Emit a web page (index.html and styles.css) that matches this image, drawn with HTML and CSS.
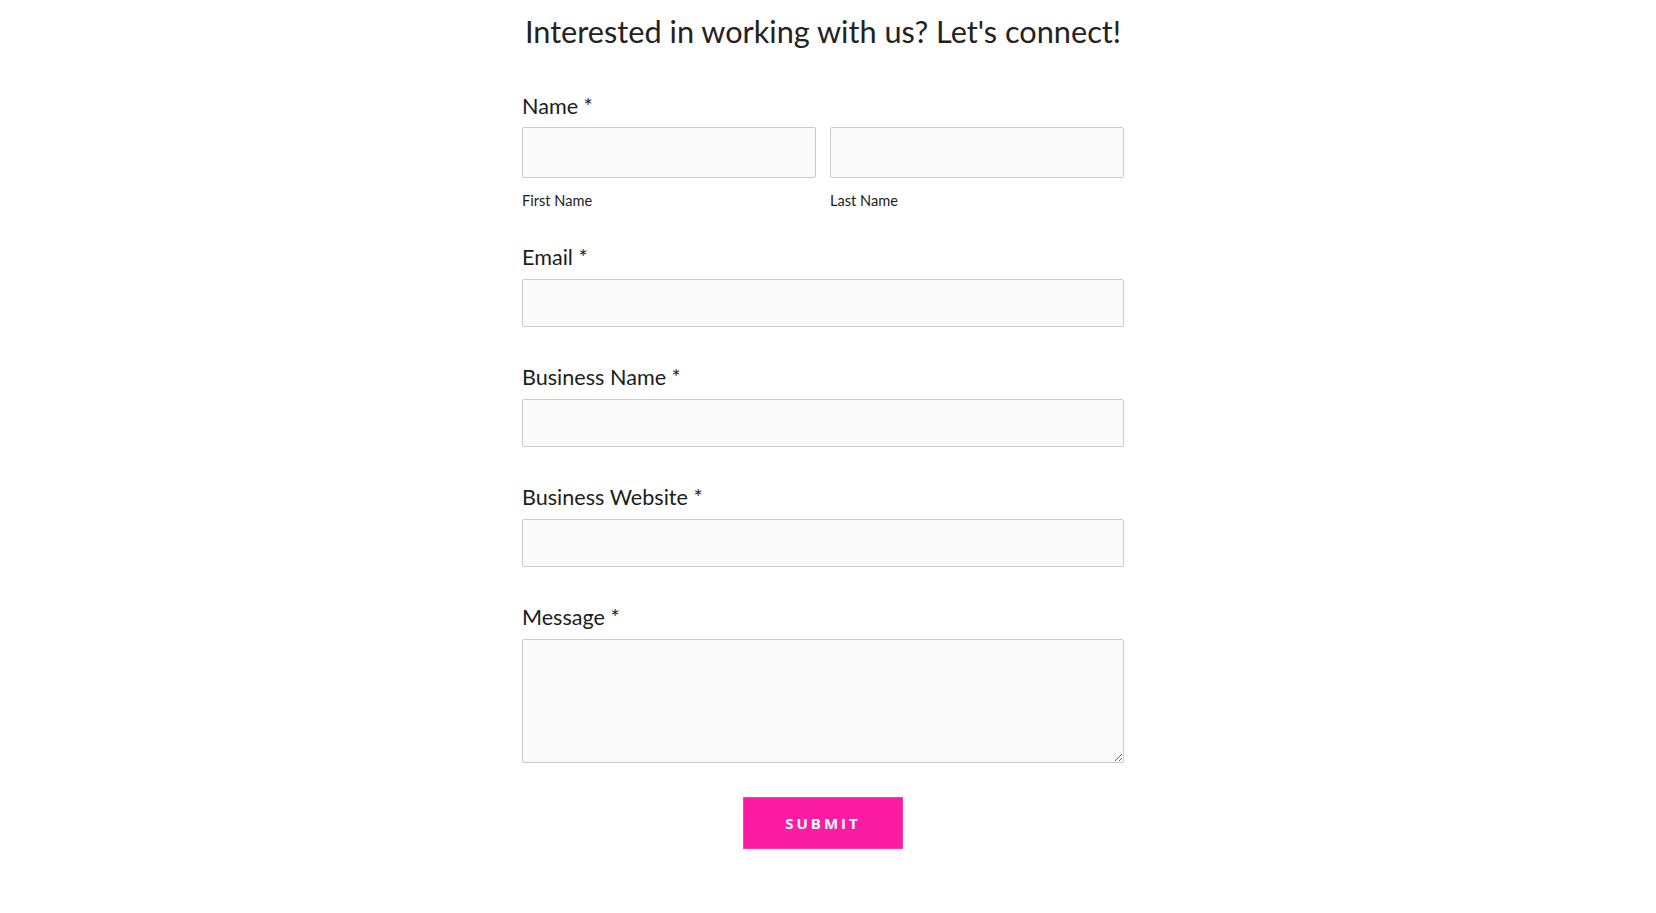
FILE: index.html
```html
<!DOCTYPE html>
<html lang="en">
<head>
  <meta charset="UTF-8">
  <meta name="viewport" content="width=device-width, initial-scale=1.0">
  <title>Contact</title>
  <link rel="stylesheet" href="styles.css">
</head>
<body>
  <div class="wrap">
    <h2 class="title">Interested in working with us? Let's connect!</h2>

    <form class="contact-form">
      <div class="field name-field">
        <label class="field-label">Name *</label>
        <div class="name-row">
          <div class="name-part">
            <input type="text" name="fname">
            <span class="sub-label">First Name</span>
          </div>
          <div class="name-part">
            <input type="text" name="lname">
            <span class="sub-label">Last Name</span>
          </div>
        </div>
      </div>

      <div class="field">
        <label class="field-label">Email *</label>
        <input type="email" name="email">
      </div>

      <div class="field">
        <label class="field-label">Business Name *</label>
        <input type="text" name="business">
      </div>

      <div class="field">
        <label class="field-label">Business Website *</label>
        <input type="text" name="website">
      </div>

      <div class="field">
        <label class="field-label">Message *</label>
        <textarea name="message"></textarea>
      </div>

      <div class="actions">
        <button type="submit">Submit</button>
      </div>
    </form>
  </div>
</body>
</html>
```

FILE: styles.css
```css
body { margin: 0; background: #fff; font-family: Lato, "Open Sans", sans-serif; color: #1c1c1c; }
.wrap { width: 602px; margin: 0 auto; padding: 14px 10px 40px 0; }
.title { margin: 0 0 44px; font-size: 30.7px; line-height: 36px; font-weight: 400; text-align: center; color: #222; }
.field { margin-bottom: 38px; }
.name-field { margin-bottom: 36px; }
.field-label { display: block; font-size: 21.6px; line-height: 24px; margin-bottom: 10px; }
.name-field .field-label { margin-bottom: 9px; }
.name-row { display: flex; gap: 14px; }
.name-part { flex: 1; }
.sub-label { display: block; margin-top: 15px; font-size: 14.6px; line-height: 16px; }
input, textarea { display: block; width: 100%; box-sizing: border-box; height: 48px; margin: 0; padding: 10px 12px;
  background: #fafafa; border: 1px solid #ccc; border-radius: 2px; font: inherit; }
.name-part input { height: 51px; }
textarea { height: 124px; resize: vertical; }
.actions { display: flex; justify-content: center; margin-top: -4px; }
button { width: 160px; height: 52px; background: #fc1ba3; color: #fff; border: 1px solid #ff3cb0; font-family: "Open Sans", sans-serif;
  font-size: 15px; font-weight: 700; letter-spacing: 3px; text-transform: uppercase; cursor: pointer; }
```
